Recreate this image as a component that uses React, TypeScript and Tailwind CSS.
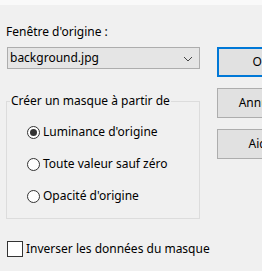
export default function App() {
  return (
    <div
      className="w-[262px] h-[271px] overflow-hidden bg-[#f0f0f0] text-[12px] text-black whitespace-nowrap"
      style={{ fontFamily: '"Noto Sans", "Segoe UI", sans-serif' }}
    >
      <div className="h-[5px] bg-[#f9f9f9]" />
      <div className="flex pl-[6px]">
        {/* left column */}
        <div className="w-[194px] shrink-0">
          <div className="h-[20px] mt-[17px] leading-[20px]">Fenêtre d'origine :</div>
          <div className="mt-[5px] ml-[1px] h-[22px] flex items-center justify-between border border-[#adadad] bg-[#e5e5e5] pl-[2px] pr-[6px]">
            <span className="leading-[20px]">background.jpg</span>
            <svg width="10" height="6" viewBox="0 0 10 6" className="mt-[1px]">
              <path d="M1 1 L5 5 L9 1" fill="none" stroke="#444" strokeWidth="1" />
            </svg>
          </div>

          <fieldset className="mt-[23px] h-[127px] border border-[#dcdcdc] pl-[3px]">
            <legend className="px-[1px] leading-[18px]">Créer un masque à partir de</legend>
            <div className="flex flex-col gap-[12px] mt-[12px] pl-[17px]">
              <Radio label="Luminance d'origine" checked />
              <Radio label="Toute valeur sauf zéro" />
              <Radio label="Opacité d'origine" />
            </div>
          </fieldset>

          <label className="mt-[21px] ml-[1px] flex items-center gap-[3px] h-[17px]">
            <span className="w-[16px] h-[16px] shrink-0 border border-[#333] bg-white" />
            <span className="leading-[20px]">Inverser les données du masque</span>
          </label>
        </div>

        {/* right column */}
        <div className="ml-[17px] mt-[42px] flex flex-col gap-[11px] shrink-0">
          <button className="w-[88px] h-[30px] border-2 border-[#0078d7] bg-[#e1e1e1] text-center">OK</button>
          <button className="w-[88px] h-[30px] border border-[#adadad] bg-[#e1e1e1] text-center">Annuler</button>
          <button className="w-[88px] h-[30px] border border-[#adadad] bg-[#e1e1e1] text-center">Aide</button>
        </div>
      </div>
    </div>
  );
}

function Radio({ label, checked }: { label: string; checked?: boolean }) {
  return (
    <div className="flex items-center gap-[3px] h-[20px]">
      <span className="w-[13px] h-[13px] shrink-0 rounded-full border border-[#333] bg-white flex items-center justify-center">
        {checked && <span className="w-[7px] h-[7px] rounded-full bg-[#333]" />}
      </span>
      <span className="leading-[20px]">{label}</span>
    </div>
  );
}
